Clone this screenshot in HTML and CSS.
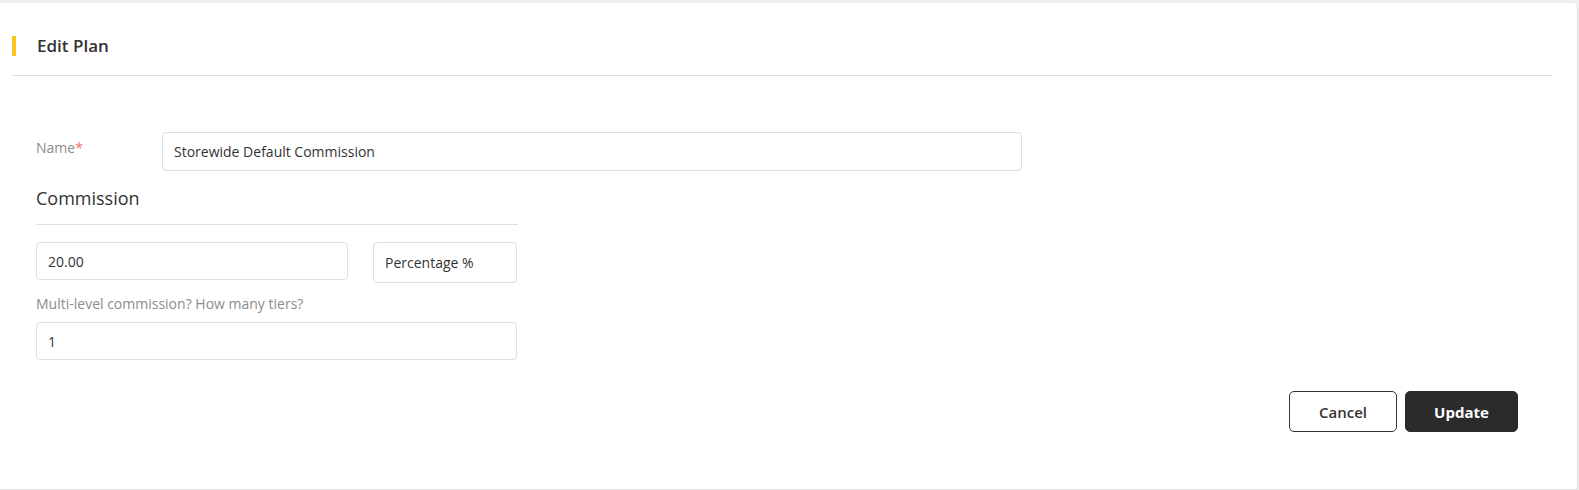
FILE: index.html
```html
<!DOCTYPE html>
<html>
<head>
<meta charset="utf-8">
<link rel="stylesheet" href="styles.css">
</head>
<body>
<div class="card">
  <div class="header"><span class="title">Edit Plan</span></div>
  <div class="form">
    <div class="name-row">
      <label class="label">Name<span class="req">*</span></label>
      <div class="input name-input">Storewide Default Commission</div>
    </div>
    <div class="section-title">Commission</div>
    <div class="commission-row">
      <div class="input amount">20.00</div>
      <div class="input select">Percentage %</div>
    </div>
    <div class="label tiers-label">Multi-level commission? How many tiers?</div>
    <div class="input tiers">1</div>
  </div>
  <div class="actions">
    <button class="btn cancel">Cancel</button>
    <button class="btn update">Update</button>
  </div>
</div>
</body>
</html>
```
FILE: styles.css
```css
* { box-sizing: border-box; }
html, body { margin: 0; padding: 0; }
body {
  background: #f0f0f0;
  font-family: "Open Sans", "Noto Sans", sans-serif;
  color: #333;
  width: 1579px;
  height: 490px;
  overflow: hidden;
}
.card {
  margin-top: 3px;
  width: 1578px;
  height: 487px;
  background: #fff;
  border-right: 1px solid #e3e3e3;
  border-bottom: 1px solid #e3e3e3;
  border-top-right-radius: 4px;
}
.header {
  height: 73px;
  padding-top: 13px;
  margin: 0 25px 0 12px;
  border-bottom: 1px solid #dedede;
  display: flex;
  align-items: center;
}
.title {
  border-left: 4px solid #f8c51c;
  padding-left: 21px;
  font-size: 17px;
  line-height: 20px;
  font-weight: 600;
  color: #333;
}
.form {
  padding: 56px 0 0 36px;
}
.name-row {
  display: flex;
  align-items: flex-start;
}
.label {
  font-size: 14px;
  line-height: 18px;
  color: #8c8c8c;
}
.name-row .label {
  width: 126px;
  padding-top: 7px;
}
.req { color: #f56c6c; }
.input {
  height: 38px;
  border: 1px solid #dcdfe6;
  border-radius: 4px;
  padding: 0 11px;
  font-size: 14px;
  color: #333;
  display: flex;
  align-items: center;
}
.name-input { width: 860px; height: 39px; }
.section-title {
  margin-top: 15px;
  width: 482px;
  font-size: 18px;
  line-height: 24px;
  padding-bottom: 14px;
  border-bottom: 1px solid #dedede;
  color: #333;
}
.commission-row {
  margin-top: 17px;
  display: flex;
  align-items: flex-start;
}
.amount { width: 312px; }
.select { width: 144px; height: 41px; margin-left: 25px; }
.tiers-label { margin-top: 12px; }
.tiers { margin-top: 9px; width: 481px; }
.actions {
  display: flex;
  justify-content: flex-end;
  gap: 8px;
  padding-right: 59px;
  margin-top: 31px;
}
.btn {
  height: 41px;
  border-radius: 5px;
  font-family: "Open Sans", "Noto Sans", sans-serif;
  font-size: 15px;
  font-weight: 600;
  cursor: pointer;
}
.cancel {
  width: 108px;
  background: #fff;
  border: 1px solid #333;
  color: #333;
}
.update {
  width: 113px;
  background: #2b2b2b;
  border: 1px solid #2b2b2b;
  color: #fff;
  font-weight: 700;
}
```
